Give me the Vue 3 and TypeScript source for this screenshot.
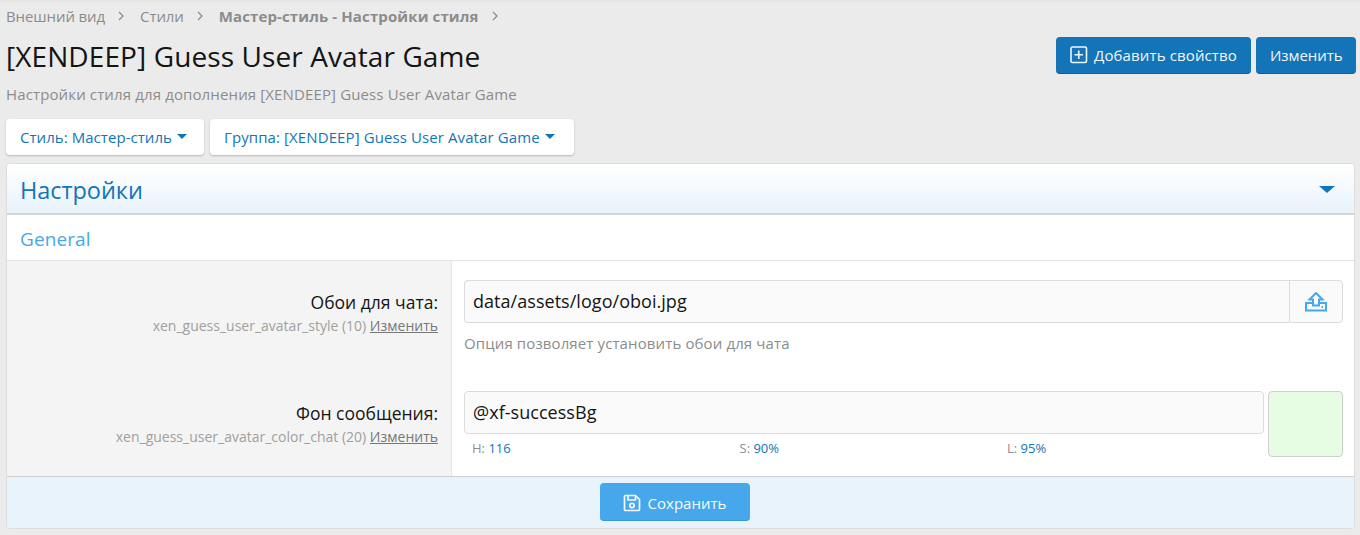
<script setup lang="ts">
const hsl = [
  { k: 'H:', v: '116' },
  { k: 'S:', v: '90%' },
  { k: 'L:', v: '95%' },
]
</script>

<template>
  <div class="page">
    <nav class="crumbs">
      <span>Внешний вид</span>
      <svg class="chev" viewBox="0 0 8 12" width="8" height="12"><path d="M2 2l4 4-4 4" /></svg>
      <span>Стили</span>
      <svg class="chev" viewBox="0 0 8 12" width="8" height="12"><path d="M2 2l4 4-4 4" /></svg>
      <b>Мастер-стиль - Настройки стиля</b>
      <svg class="chev" viewBox="0 0 8 12" width="8" height="12"><path d="M2 2l4 4-4 4" /></svg>
    </nav>

    <header class="head">
      <div>
        <h1>[XENDEEP] Guess User Avatar Game</h1>
        <p class="sub">Настройки стиля для дополнения [XENDEEP] Guess User Avatar Game</p>
      </div>
      <div class="actions">
        <button class="btn">
          <svg viewBox="0 0 18 18" width="18" height="18" class="plus">
            <rect x="1" y="1" width="15.5" height="15.5" rx="1.5" />
            <path d="M8.75 4.5v8.5M4.5 8.75h8.5" />
          </svg>
          Добавить свойство
        </button>
        <button class="btn edit">Изменить</button>
      </div>
    </header>

    <div class="filters">
      <button class="filter f1">Стиль: Мастер-стиль<i class="caret"></i></button>
      <button class="filter f2">Группа: [XENDEEP] Guess User Avatar Game<i class="caret"></i></button>
    </div>

    <section class="card">
      <div class="card-head">
        <h2>Настройки</h2>
        <i class="caret big"></i>
      </div>
      <h3 class="group">General</h3>

      <div class="row row1">
        <div class="label">
          <div class="name">Обои для чата:</div>
          <div class="meta">xen_guess_user_avatar_style (10) <a>Изменить</a></div>
        </div>
        <div class="value">
          <div class="upload">
            <div class="field joined">data/assets/logo/oboi.jpg</div>
            <div class="up-btn">
              <svg viewBox="0 0 22 20" width="22" height="20">
                <path d="M11 1l6.5 6.5H14v6H8v-6H4.500z" />
                <path d="M7 11H1v7.500h20V11h-6" />
                <path d="M16.500 15H18" />
              </svg>
            </div>
          </div>
          <div class="hint">Опция позволяет установить обои для чата</div>
        </div>
      </div>

      <div class="row row2">
        <div class="label">
          <div class="name">Фон сообщения:</div>
          <div class="meta">xen_guess_user_avatar_color_chat (20) <a>Изменить</a></div>
        </div>
        <div class="value color">
          <div class="color-main">
            <div class="field">@xf-successBg</div>
            <div class="hsl">
              <span v-for="c in hsl" :key="c.k">{{ c.k }} <em>{{ c.v }}</em></span>
            </div>
          </div>
          <div class="swatch"></div>
        </div>
      </div>

      <div class="foot">
        <button class="save">
          <svg viewBox="0 0 18 18" width="18" height="18">
            <path d="M2.5 1.5h10l4 4v10a1 1 0 0 1-1 1h-13a1 1 0 0 1-1-1v-13a1 1 0 0 1 1-1z" />
            <path d="M5 1.5v4.5h7.5v-4.5" />
            <circle cx="9" cy="11.5" r="2.2" />
          </svg>
          Сохранить
        </button>
      </div>
    </section>
  </div>
</template>

<style>
html, body { margin: 0; background: #ebebeb; }
</style>

<style scoped>
.page {
  box-sizing: border-box;
  width: 1360px;
  height: 535px;
  padding: 0 4px 0 6px;
  overflow: hidden;
  background: linear-gradient(#e2e2e2, #ebebeb 3px);
  font-family: "Open Sans", "Noto Sans", sans-serif;
  color: #141414;
}
.crumbs {
  height: 18px;
  padding-top: 7px;
  display: flex;
  align-items: center;
  font-size: 15px;
  letter-spacing: -.1px;
  color: #8c8c8c;
}
.crumbs b { font-weight: 700; letter-spacing: .12px; }
.chev { margin: 0 15px 0 12px; }
.chev path { fill: none; stroke: #8c8c8c; stroke-width: 1.3; }
.head {
  display: flex;
  justify-content: space-between;
  margin-top: 12px;
  height: 82px;
}
h1 {
  margin: 0;
  font-size: 28px;
  font-weight: 400;
  line-height: 38px;
  letter-spacing: .1px;
}
.sub {
  margin: 9px 0 0;
  font-size: 15px;
  line-height: 20px;
  letter-spacing: .13px;
  color: #8c8c8c;
}
.actions { display: flex; gap: 5px; height: 37px; }
.btn {
  display: flex;
  align-items: center;
  gap: 6px;
  box-sizing: border-box;
  width: 195px;
  height: 37px;
  padding: 0 14px;
  border: 0;
  border-bottom: 1px solid #0f5f9e;
  border-radius: 4px;
  background: #1474b8;
  color: #f2f6fa;
  font: inherit;
  font-size: 15px;
  letter-spacing: .13px;
  white-space: nowrap;
}
.btn.edit { width: 100px; letter-spacing: -.05px; }
.plus rect, .plus path { fill: none; stroke: #f2f6fa; stroke-width: 1.6; }
.filters { display: flex; gap: 6px; height: 36px; }
.filter {
  display: flex;
  align-items: center;
  box-sizing: border-box;
  height: 36px;
  padding: 0 14px;
  border: 0;
  border-radius: 4px;
  background: #fff;
  box-shadow: 0 1px 2px rgba(0,0,0,.22);
  color: #1474b8;
  font: inherit;
  font-size: 15px;
  letter-spacing: .1px;
  white-space: nowrap;
}
.f1 { width: 198px; letter-spacing: .05px; }
.f2 { width: 364px; }
.caret {
  display: inline-block;
  width: 0;
  height: 0;
  margin: -2px 0 0 5px;
  border-left: 5.5px solid transparent;
  border-right: 5.5px solid transparent;
  border-top: 5.5px solid #1474b8;
}
.caret.big {
  margin: 0;
  border-left-width: 8px;
  border-right-width: 8px;
  border-top-width: 7px;
}
.card {
  margin-top: 8px;
  width: 1349px;
  height: 366px;
  box-sizing: border-box;
  background: #fff;
  border: 1px solid #dcdcdc;
  border-radius: 4px;
  overflow: hidden;
  display: flex;
  flex-direction: column;
}
.card-head {
  display: flex;
  align-items: center;
  justify-content: space-between;
  box-sizing: border-box;
  height: 51px;
  padding: 2px 19px 0 13px;
  border-bottom: 2px solid #d2d7dc;
  background: linear-gradient(#fff, #e8f3fc);
}
h2 {
  margin: 0;
  font-size: 23.5px;
  font-weight: 400;
  letter-spacing: -.05px;
  color: #1474b8;
}
.group {
  box-sizing: border-box;
  height: 46px;
  margin: 0;
  padding: 0 13px;
  border-bottom: 1px solid #e4e4e4;
  font-size: 19px;
  font-weight: 400;
  line-height: 48px;
  letter-spacing: .1px;
  color: #47a7eb;
}
.row { display: flex; }
.row1 { height: 111px; }
.row2 { height: 104px; }
.label {
  box-sizing: border-box;
  width: 445px;
  padding: 29px 13px 0 0;
  border-right: 1px solid #e4e4e4;
  background: #f4f4f4;
  text-align: right;
}
.name { font-size: 17.5px; line-height: 25px; }
.meta { font-size: 14px; line-height: 22px; color: #a0a0a0; }
.meta a { color: #777; text-decoration: underline; }
.value { flex: 1; padding: 19px 11px 0 12px; min-width: 0; }
.upload { display: flex; height: 43px; }
.field {
  box-sizing: border-box;
  height: 43px;
  padding: 0 8px;
  border: 1px solid #dcdcdc;
  border-radius: 4px;
  background: #fafafa;
  font-size: 18px;
  line-height: 41px;
  letter-spacing: .04px;
}
.field.joined { flex: 1; border-radius: 4px 0 0 4px; border-right: 0; }
.up-btn {
  box-sizing: border-box;
  width: 54px;
  display: flex;
  align-items: center;
  justify-content: center;
  border: 1px solid #dcdcdc;
  border-radius: 0 4px 4px 0;
  background: #fafafa;
}
.up-btn path { fill: none; stroke: #47a7eb; stroke-width: 2; }
.hint {
  margin-top: 10px;
  font-size: 15px;
  line-height: 20px;
  letter-spacing: .12px;
  color: #8c8c8c;
}
.color { display: flex; gap: 4px; }
.color-main { flex: 1; }
.hsl {
  display: grid;
  grid-template-columns: 267.5px 267.5px 1fr;
  padding: 5px 8px 0;
  font-size: 13px;
  line-height: 18px;
  color: #8c8c8c;
}
.hsl em { font-style: normal; color: #1474b8; }
.swatch {
  box-sizing: border-box;
  width: 75px;
  height: 66px;
  border: 1px solid #cfcfcf;
  border-radius: 4px;
  background: #e6fde3;
}
.foot {
  flex: 1;
  display: flex;
  justify-content: center;
  padding: 6px 12px 0 0;
  border-top: 1px solid #cfcfcf;
  background: #e8f3fc;
}
.save {
  display: flex;
  align-items: center;
  justify-content: center;
  gap: 7px;
  box-sizing: border-box;
  width: 150px;
  height: 38px;
  padding-top: 3px;
  border: 0;
  border-bottom: 1px solid #3a97dc;
  border-radius: 4px;
  background: #47a7eb;
  color: #f6fafd;
  font: inherit;
  font-size: 15px;
}
.save path, .save circle { fill: none; stroke: #f6fafd; stroke-width: 1.7; }
</style>
